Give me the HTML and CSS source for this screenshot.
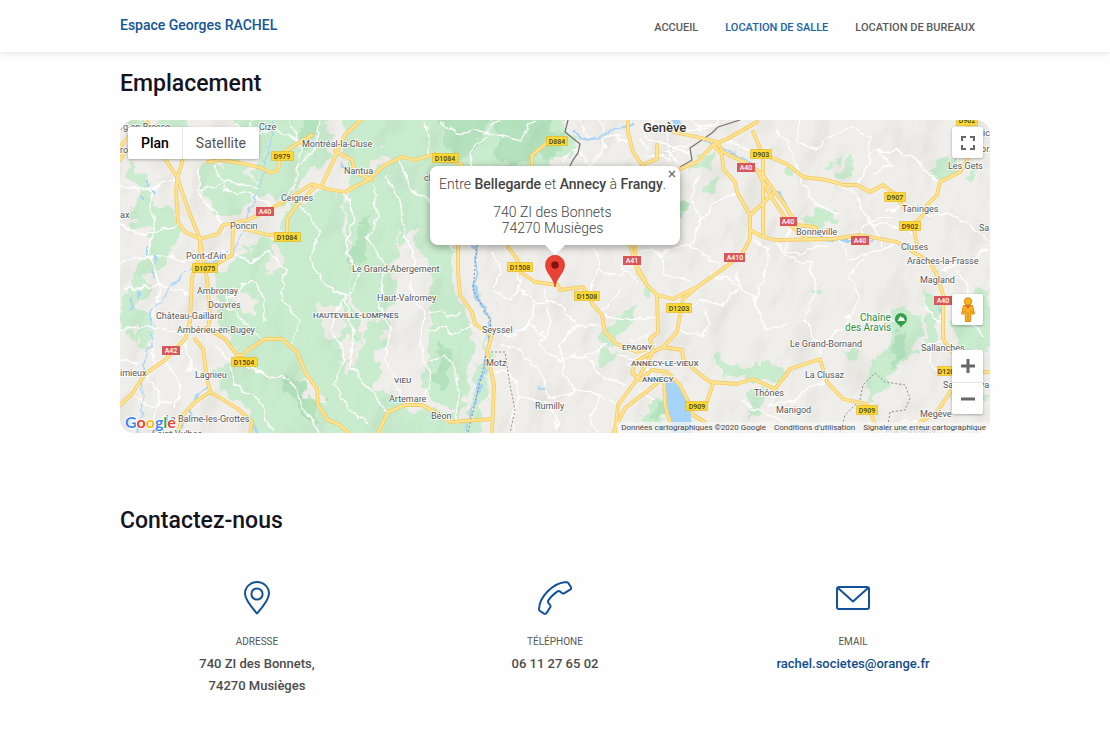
FILE: index.html
```html
<!DOCTYPE html>
<html lang="fr">
<head>
<meta charset="utf-8">
<meta name="viewport" content="width=device-width, initial-scale=1">
<title>Espace Georges RACHEL</title>
<link rel="stylesheet" href="styles.css">
</head>
<body>
<header class="site-header">
  <div class="container header-row">
    <a class="brand" href="#">Espace Georges RACHEL</a>
    <nav class="nav">
      <a href="#">ACCUEIL</a>
      <a class="active" href="#">LOCATION DE SALLE</a>
      <a href="#">LOCATION DE BUREAUX</a>
    </nav>
  </div>
</header>
<main class="container">
  <section>
    <h2>Emplacement</h2>
    <div class="map">
      <svg class="map-canvas" viewBox="120 120 870 313" preserveAspectRatio="xMidYMid slice" role="img" aria-label="Carte">
        <defs>
          <filter id="rough" x="-5%" y="-5%" width="110%" height="110%" color-interpolation-filters="sRGB">
            <feTurbulence type="fractalNoise" baseFrequency="0.06" numOctaves="3" seed="4"/>
            <feDisplacementMap in="SourceGraphic" scale="24" xChannelSelector="R" yChannelSelector="G"/>
          </filter>
          <filter id="wiggle" x="-5%" y="-5%" width="110%" height="110%" color-interpolation-filters="sRGB">
            <feTurbulence type="fractalNoise" baseFrequency="0.09" numOctaves="2" seed="9"/>
            <feDisplacementMap in="SourceGraphic" scale="10" xChannelSelector="R" yChannelSelector="G"/>
          </filter>
          <filter id="relief" x="0" y="0" width="100%" height="100%" color-interpolation-filters="sRGB">
            <feTurbulence type="fractalNoise" baseFrequency="0.05 0.022" numOctaves="3" seed="12"/>
            <feColorMatrix values="0 0 0 0 0.5  0 0 0 0 0.55  0 0 0 0 0.5  1.6 0 0 0 -0.78"/>
          </filter>
          <path id="roads" d="M165 159 177 177 188 209 200 239 200 255 192 277 190 322 185 339 165 360 145 374 132 394 120 405
            M183 159 177 179 176 192 178 222 185 232 200 239 218 234 223 225 248 220 265 212 288 199 312 184 327 189 345 192 368 180 385 165 402 157 415 160 435 154 462 165
            M233 228 232 255 215 265M200 239 203 259 207 279 210 315 208 329 198 329M245 229 268 235 287 234 287 219 297 205 315 187
            M208 162 221 160 240 163 262 168 270 173 278 170 280 155 295 145 312 135
            M322 185 328 172 335 157 345 135 362 119M335 151 352 160 355 172 372 180
            M120 160 132 142 148 122M120 147 130 135
            M195 339 203 349 207 379 210 392 238 409 252 422 250 433M210 392 195 402 183 415 178 433
            M208 329 225 339 237 355 243 355 248 350 265 339 282 339 297 352 305 372 317 389 318 405 328 420 340 425 348 433
            M378 433 388 412 405 405 422 405 435 412 450 422 492 419M492 433 494 385 487 352 492 335 475 324 472 312 460 295 458 272 458 245
            M508 247 517 259 520 272 535 282 558 285 560 290 583 287 593 305 602 315 605 332 617 344 637 352 645 350
            M532 165 532 155 548 142
            M628 120 628 132 633 152 642 165M657 145 657 159 642 165M678 170 697 162 713 145 727 139 757 122
            M673 132 697 137 717 142 723 152 750 165 763 175 775 192 783 202 797 225 815 227 818 232
            M713 145 722 155 723 169 735 182 737 192 750 215 750 239 742 254 723 269 697 287 673 299 657 295 647 285 638 272 630 245
            M750 215 775 192M750 230 763 237 775 240 833 239M763 237 763 155 753 132
            M657 295 658 332 650 339 653 352 640 375 618 405 615 433M697 287 683 299 677 332 663 347 653 352
            M663 347 682 350 683 359 697 372 710 382 737 384 753 379 775 389 790 369 820 359 827 382 843 399 867 404 873 419 878 433
            M713 384 707 402M640 380 652 370 667 372 680 385 690 405 693 415 705 422
            M664 377 665 405 670 422M613 433 625 408 650 389 664 377M653 352 635 362 632 373 640 380
            M770 157 787 164 803 177 827 180 843 185 857 185 870 192 883 185 895 194 903 207
            M757 170 770 195 790 225 807 239 833 239 860 235 897 242 913 252 930 262 937 275 943 295 943 339 952 352 968 372 990 372
            M917 245 913 225 923 215 927 205 937 195 940 182 960 172 970 155 967 120M975 385 952 389 937 412 920 422 917 433M635 245 636 265 645 280"/>
        </defs>
        <rect x="120" y="120" width="870" height="313" fill="#f0eeea"/>
        <g filter="url(#rough)" fill="#c9ecce">
          <path d="M128 160 145 170 155 200 172 215 178 240 160 250 148 232 130 225 138 195zM165 210 178 230 168 262 150 275 142 300 155 325 145 350 130 330 120 335 120 300 140 270zM200 165 245 160 260 190 240 215 212 212 200 190zM130 120 190 120 200 140 180 160 150 150z"/>
          <path d="M225 110 335 110 328 150 310 175 280 203 255 190 258 160 238 140zM285 208 325 190 345 198 340 235 352 262 348 300 362 330 355 370 372 400 352 440 250 440 250 410 222 395 215 370 238 358 228 335 215 320 222 290 212 275 240 255 262 240 285 240z"/>
          <path d="M342 110 565 110 575 150 545 170 475 170 464 210 452 240 457 290 472 330 470 370 462 418 428 402 425 360 430 320 432 280 418 245 415 210 405 190 398 240 395 300 380 320 362 318 352 300 348 240 345 205 350 190 345 160zM365 325 385 320 380 360 370 400 355 370zM400 170 425 172 418 225 400 245zM470 400 485 350 492 300 487 380 480 433 466 433z"/>
          <path d="M355 405 390 385 410 410 480 420 480 440 350 440z"/>
          <path d="M600 330 620 315 640 305 625 330 610 350zM600 345 617 352 608 370 598 370zM655 395 665 400 666 425 650 433 640 420 648 405zM720 355 740 370 775 360 785 380 750 382 720 378zM705 180 718 175 715 195 705 192zM680 200 690 205 685 215 677 212zM748 395 760 385 765 405 748 420zM640 292 650 288 650 297zM700 155 715 150 705 168 690 170z"/>
          <path d="M848 160 855 165 848 182 838 178zM810 215 835 210 830 225 800 222zM935 165 955 155 950 180 935 180zM965 175 975 165 975 180zM895 305 918 312 920 345 900 360 890 385 870 400 865 385 880 360 890 330zM920 290 940 300 940 350 925 345zM950 300 990 290 990 350 960 355zM845 350 855 352 850 362 842 360zM950 390 990 395 980 410 955 405zM785 172 800 172 800 180zM810 285 822 288 818 295zM550 125 570 122 575 145 560 152zM830 165 836 162 836 170z"/>
        </g>
        <g filter="url(#rough)" fill="#b3e2bd">
          <path d="M430 115 490 115 480 150 455 160 445 140zM495 115 562 115 540 150 515 168 495 150zM545 133 562 135 558 160 545 160zM300 125 325 120 315 135 300 150zM290 370 330 400 310 420 280 390zM355 230 372 210 365 260 350 270zM440 340 455 350 445 395 432 380zM895 335 910 330 905 350 885 375zM655 400 666 400 662 420 650 425zM678 200 690 203 684 216z"/>
        </g>
        <g filter="url(#rough)" fill="#f0ede9">
          <path d="M255 205 275 205 268 225 250 225zM270 250 285 255 275 280 262 265zM320 300 345 310 335 340 325 330zM300 380 320 385 330 410 310 400zM350 335 360 350 345 380 340 350zM440 170 450 175 445 200 436 190zM238 290 255 300 245 320 232 300zM380 150 390 155 378 172 372 165z"/>
        </g>
        <g transform="rotate(22 555 276)"><rect x="60" y="-100" width="990" height="760" filter="url(#relief)" opacity=".17"/></g>
        <g fill="none" stroke="#fff" stroke-width="1.4" filter="url(#wiggle)">
          <path d="M120 185 150 190 175 180M120 225 145 235 178 225M120 265 150 255 192 260M125 290 160 285 190 295M120 330 150 325 185 335M150 190 155 225 150 255 160 285 150 325 155 365M200 160 198 190 215 215 223 225M215 165 225 190 250 195 275 205M200 190 230 180 262 190M235 125 255 135 275 130 300 140M252 120 248 145 230 160M290 120 300 150 296 180 288 199M320 120 315 150 300 165M205 255 225 250 250 262 270 250 285 270 280 300 300 320 290 345M210 300 235 310 250 330 265 339M225 300 250 280 262 290 265 320M213 345 230 360 235 385 260 400 270 433M240 360 265 375 290 380 305 410 320 433M145 374 160 395 155 420 160 433M165 360 180 385 175 410M132 394 150 405 175 400M185 340 190 370 207 379M120 360 140 365M300 205 320 230 310 260 325 285 345 295 330 330 345 350 335 385 350 410 370 425M345 192 355 220 345 250 360 275 345 300 355 335 350 365 365 385 388 412M372 185 378 215 368 240 385 265 378 300 390 330 385 360 395 380 405 405M385 175 400 200 405 235 415 260 410 290 425 310 420 345 430 375 425 405M400 160 410 190 430 200 440 235 458 250M430 155 425 125M470 170 475 145 490 130 500 120M440 120 460 135 475 130 520 140 535 120M430 330 445 325 452 335 475 324M430 360 445 355 455 370 460 400 455 422M430 315 440 310 450 318 462 312"/>
          <path d="M490 250 500 265 495 290 510 300 520 290 535 300 530 325 515 335 492 330M520 290 517 265M535 300 560 305 575 325 600 325M545 290 550 320 540 345 560 360 585 355 605 345M500 345 520 350 545 380 550 400 575 390 600 395 618 405M530 325 545 340M492 370 510 375 520 395 550 405 560 433M520 395 510 420 515 433M575 325 560 345 565 375 575 390M585 355 600 375 625 385M600 395 590 420 600 433M595 250 600 270 620 275 636 265M600 270 590 290M640 250 660 255 690 245 720 265M660 255 665 275 690 280M690 245 700 220 720 200 737 192M700 220 690 195 700 175M620 290 610 305 600 310M605 315 630 320 658 315M683 310 700 300 720 305 740 285M677 332 700 335 710 325 705 310M740 285 735 270M710 275 730 280 755 300 765 330 790 325M750 239 770 250 765 275 755 300M775 240 790 260 810 262 815 290 805 320 820 350M637 280 620 265"/>
          <path d="M580 120 590 140 610 135 628 140M600 120 605 150 590 165M560 160 575 150 590 165M640 125 650 140 670 145 690 155M650 120 660 130 675 125 690 130 705 125M640 140 650 150M670 120 668 150 678 165M690 120 700 130 720 120M660 150 690 145M645 155 670 158M775 130 790 145 800 175M800 120 795 140 815 150 835 135 850 125 870 140 868 165 857 185M727 139 745 150 763 155M800 177 815 205 840 215M840 185 860 200 870 225 885 245M870 225 895 225 917 235M885 210 903 207 925 215 955 215 990 240M875 175 890 165 880 150 910 155 930 175 940 182M960 172 955 150M860 235 870 220 895 215M790 225 785 250 800 255 825 245M840 240 850 260 880 250 897 242M818 360 825 340 845 325 860 300 850 275 865 260M827 382 810 385 795 400 770 405 775 389M743 400 755 410 780 420 800 433M890 433 905 420 920 422M925 305 935 320 943 325M943 339 930 345 930 365 945 375M955 270 970 290 965 320 985 335M990 250 970 260 940 270M640 392 655 400M620 355 640 362M625 365 640 360 660 365M630 340 645 335 655 345M645 365 655 380"/>
        </g>
        <g fill="none" stroke="#a7d3f7" stroke-width="1.6" filter="url(#wiggle)">
          <path d="M275 122 270 145 262 175 260 190 252 205 245 225 235 250 215 260 185 272 170 290 150 310 152 345 142 370 143 400 140 433" stroke-width="1.2"/>
          <path d="M475 245 477 300 490 318 489 345 485 365 475 400 468 433" stroke-width="3"/>
          <path d="M572 130 585 140 598 138 612 130 625 128 635 122M705 140 745 160 772 185 800 230 830 240 890 240M210 385 195 400 180 433M940 300 945 345" stroke-width="2"/>
          <path d="M340 165 356 174M250 420 260 433M538 388 546 390" stroke-width="3"/>
          <path d="M147 180v8M152 190v5M143 195v5M148 245v10M155 255v8M130 295l3 14M137 290l2 8M152 270l2 8" stroke-width="2"/>
        </g>
        <path d="M665 378 672 379 680 386 690 404 692 433 671 433 667 405z" fill="#a5d4f8"/>
        <path d="M672 120 680 120 682 127 674 125z" fill="#a5d4f8"/>
        <g fill="none" stroke="#8d8d8d" stroke-width="1">
          <path d="M568 120 565 132 580 144 578 153 573 160 568 170M680 167 692 160 690 148 712 133 718 127 740 120" stroke="#777" stroke-width="1.3"/>
          <path d="M477 245 473 290 491 322 487 352 468 433M487 352 505 352 510 385 515 410 510 433M840 433 845 415 860 400 863 385 875 373 885 382 905 385 910 398 905 410 890 412 888 425" stroke-dasharray="2 2"/>
        </g>
        <g fill="none" stroke-linejoin="round" stroke-linecap="round">
          <use href="#roads" stroke="#f5cd66" stroke-width="3.8"/>
          <use href="#roads" stroke="#ffe494" stroke-width="2"/>
        </g>
        <g class="place">
          <text x="120" y="130">rg-en-Bresse</text><text x="120" y="153">ro</text>
          <text x="259" y="130">Cize</text><text x="302" y="147">Montréal-la-Cluse</text>
          <text x="344" y="174">Nantua</text><text x="281" y="201">Ceignes</text>
          <text x="230" y="229">Poncin</text><text x="186" y="259">Pont-d'Ain</text>
          <text x="120" y="218">ax</text><text x="352" y="272">Le Grand-Abergement</text>
          <text x="424" y="181">ch</text>
          <text x="197" y="294">Ambronay</text><text x="208" y="308">Douvres</text>
          <text x="156" y="319">Château-Gaillard</text><text x="177" y="333">Ambérieu-en-Bugey</text>
          <text x="120" y="376">imieux</text><text x="195" y="378">Lagnieu</text>
          <text x="166" y="422">La Balme-les-Grottes</text><text x="152" y="437">Saint-Vulbas</text>
          <text x="377" y="301">Haut-Valromey</text><text x="482" y="333">Seyssel</text>
          <text x="486" y="366">Motz</text><text x="389" y="402">Artemare</text>
          <text x="431" y="419">Béon</text><text x="535" y="409">Rumilly</text>
          <text x="796" y="235">Bonneville</text><text x="902" y="212">Taninges</text>
          <text x="901" y="250">Cluses</text><text x="907" y="264">Arâches-la-Frasse</text>
          <text x="948" y="169">Les Gets</text><text x="979" y="231">Sa</text>
          <text x="980" y="136">ric</text><text x="981" y="152">orz</text>
          <text x="920" y="283">Magland</text><text x="790" y="347">Le Grand-Bornand</text>
          <text x="805" y="378">La Clusaz</text><text x="754" y="396">Thônes</text>
          <text x="776" y="413">Manigod</text><text x="921" y="351">Sallanches</text>
          <text x="943" y="388">Saint-Gerva</text><text x="920" y="417">Megève</text>
          <text x="885" y="434">Praz-sur-Arly</text>
        </g>
        <g class="place district">
          <text x="313" y="318">HAUTEVILLE-LOMPNES</text><text x="394" y="383">VIEU</text>
          <text x="622" y="350">EPAGNY</text><text x="631" y="366">ANNECY-LE-VIEUX</text><text x="642" y="382">ANNECY</text>
        </g>
        <text class="place city" x="643" y="132">Genève</text>
        <g class="place park"><text x="860" y="321">Chaîne</text><text x="845" y="331">des Aravis</text></g>
        <path d="M901 328c-1-4-6-4-6-9a6 6 0 0 1 12 0c0 5-5 5-6 9z" fill="#34a04a"/>
        <path d="M897.500 321 900.500 316 902 318 903 317 905 321z" fill="#fff"/>
        <g fill="#fdd835" stroke="#d8b422" stroke-width=".6">
          <path d="M271.500 151.500h22v9h-22zM432.500 153.500h26v9h-26zM274.500 232.500h26v9h-26zM192.500 263.500h25v9h-25zM231.500 357.500h26v9h-26zM546.500 136.500h21v9h-21zM507.500 262.500h25v9h-25zM574.500 291.500h25v9h-25zM666.500 303.500h25v9h-25zM685.500 401.500h22v9h-22zM750.500 149.500h21v9h-21zM884.500 192.500h21v9h-21zM899.500 221.500h21v9h-21zM956.500 116.500h21v9h-21zM856.500 405.500h21v9h-21zM937.500 366.500h21v9h-21z"/>
        </g>
        <g class="shield">
          <text x="282" y="159">D979</text><text x="445" y="161">D1084</text><text x="287" y="240">D1084</text><text x="205" y="271">D1075</text>
          <text x="244" y="365">D1504</text><text x="557" y="144">D884</text><text x="520" y="270">D1508</text><text x="587" y="299">D1508</text>
          <text x="679" y="311">D1203</text><text x="697" y="409">D909</text><text x="761" y="157">D903</text><text x="895" y="200">D907</text>
          <text x="910" y="229">D902</text><text x="967" y="123">D902</text><text x="867" y="413">D909</text><text x="948" y="374">D1205</text>
        </g>
        <path d="M256 207h18v9h-18zM162 346h18v9h-18zM623 256h18v9h-18zM737 163h18v9h-18zM724 253h21v9h-21zM780 217h17v9h-17zM851 236h18v9h-18zM934 296h18v9h-18z" fill="#d9575b"/>
        <g class="shield motorway">
          <text x="265" y="214">A40</text><text x="171" y="353">A42</text><text x="632" y="263">A41</text><text x="746" y="170">A40</text>
          <text x="735" y="260">A410</text><text x="788" y="224">A40</text><text x="860" y="243">A40</text><text x="943" y="303">A40</text>
        </g>
      </svg>

      <div class="map-types">
        <button class="selected" type="button">Plan</button><button type="button">Satellite</button>
      </div>
      <button class="map-button fullscreen" type="button" aria-label="Plein écran">
        <svg width="16" height="16" viewBox="0 0 16 16" fill="none" stroke="#666" stroke-width="2"><path d="M2 6V2H6M10 2H14V6M14 10V14H10M6 14H2V10"/></svg>
      </button>
      <div class="map-tools">
        <button class="map-button" type="button" aria-label="Street View">
          <svg width="16" height="26" viewBox="0 0 16 26"><path d="M3.500 8.500h9l2 8-2 1-1.500-4-.500 11h-5l-.500-11-1.500 4-2-1z" fill="#fbb01c" stroke="#d98b16"/><circle cx="8" cy="4.500" r="3.700" fill="#fbb01c" stroke="#d98b16"/><path d="M5 8.500h6L8 12z" fill="#e8672a"/><path d="M8 15v9" stroke="#d98b16"/></svg>
        </button>
        <div class="zoom">
          <button class="map-button" type="button" aria-label="Zoom avant"><svg width="14" height="14" viewBox="0 0 14 14" stroke="#666" stroke-width="3"><path d="M0 7H14M7 0V14"/></svg></button>
          <button class="map-button" type="button" aria-label="Zoom arrière"><svg width="14" height="14" viewBox="0 0 14 14" stroke="#666" stroke-width="3"><path d="M0 7H14"/></svg></button>
        </div>
      </div>
      <div class="popup">
        <button class="close" type="button" aria-label="Fermer"><svg width="8" height="8" viewBox="0 0 8 8" stroke="#666" stroke-width="1.200"><path d="M1 1 7 7M7 1 1 7"/></svg></button>
        <p>Entre <b>Bellegarde</b> et <b>Annecy</b> à <b>Frangy</b>.</p>
        <p>740 ZI des Bonnets<br>74270 Musièges</p>
      </div>
      <svg class="marker" width="20" height="32" viewBox="0 0 20 32"><path d="M10 32C9 23 .5 18 .5 9.800a9.500 9.500 0 0 1 19 0C19.500 18 11 23 10 32z" fill="#ea4335" stroke="#d33426" stroke-width=".7"/><circle cx="10" cy="10" r="3.700" fill="#811411"/></svg>
      <a class="google" href="#"><span class="g-blue">G</span><span class="g-red">o</span><span class="g-yellow">o</span><span class="g-blue">g</span><span class="g-green">l</span><span class="g-red">e</span></a>
      <div class="credits"><span>Données cartographiques ©2020 Google</span><a href="#">Conditions d'utilisation</a><a href="#">Signaler une erreur cartographique</a></div>
    </div>
  </section>

  <section class="contact">
    <h2>Contactez-nous</h2>
    <div class="cards">
      <div class="card">
        <svg class="icon" viewBox="0 0 34 34"><path d="M17 32.500C15 30 5 19.500 5 12.500a12 11.500 0 0 1 24 0C29 19.500 19 30 17 32.500z"/><circle cx="17" cy="13" r="5.600"/></svg>
        <h3>ADRESSE</h3>
        <p>740 ZI des Bonnets,<br>74270 Musièges</p>
      </div>
      <div class="card">
        <svg class="icon" viewBox="0 0 34 34"><path d="M26.500 1.200 28.700 1.200Q29.700 1.200 30.300 2L33 6.200Q33.600 7.400 32.500 8.400L26 12.300Q24.800 12.900 23.800 12L21.800 10.300Q20.800 9.700 19.600 10.400 13 15 10.300 19.600 9.600 20.800 10.300 21.800L12 23.800Q12.900 24.800 12.300 26L8.400 32.200Q7.400 33.400 6 32.700L2 30Q1 29.400 1 28.300 1.200 19 9.500 10.500 18 2 26.500 1.200z"/></svg>
        <h3>TÉLÉPHONE</h3>
        <p>06 11 27 65 02</p>
      </div>
      <div class="card">
        <svg class="icon" viewBox="0 0 34 34"><rect x="1" y="6" width="32" height="22" rx="2"/><path d="M2 7 17 20.500 32 7"/></svg>
        <h3>EMAIL</h3>
        <p><a href="mailto:rachel.societes@orange.fr">rachel.societes@orange.fr</a></p>
      </div>
    </div>
  </section>
</main>
</body>
</html>
```
FILE: styles.css
```css
* { box-sizing: border-box; }
body { margin: 0; background: #fefefe; color: #4c4c4c; font-family: Roboto, "Liberation Sans", sans-serif; }
a { color: inherit; text-decoration: none; }
button { margin: 0; padding: 0; border: 0; background: #fff; font: inherit; cursor: pointer; }
.container { width: 100%; max-width: 900px; margin: 0 auto; padding: 0 15px; }

.site-header { background: #fefefe; box-shadow: 0 1px 6px rgba(0, 0, 0, .12); }
.header-row { display: flex; align-items: center; justify-content: space-between; height: 52px; }
.brand { padding-bottom: 2px; color: #145596; font-size: 14px; font-weight: 500; }
.nav { display: flex; gap: 27px; padding: 2px 15px 0 0; color: #5a5a5a; font-size: 11px; font-weight: 500; }
.nav .active { color: #1a62a8; }

h2 { margin: 0; color: #14141f; font-size: 23px; line-height: 28px; font-weight: 500; }
main section > h2 { padding-top: 18px; }

.map { position: relative; height: 313px; margin-top: 22px; border-radius: 14px; overflow: hidden; }
.map-canvas { display: block; width: 100%; height: 100%; }
.place { fill: #55585b; font-size: 9px; paint-order: stroke; stroke: rgba(255, 255, 255, .75); stroke-width: 2px; stroke-linejoin: round; }
.district { fill: #5d6470; font-size: 8px; font-weight: 500; }
.city { fill: #333; font-size: 13px; font-weight: 500; }
.park { fill: #2c8f49; font-size: 10px; }
.shield { fill: #4a4213; font-size: 7px; font-weight: 500; text-anchor: middle; }
.motorway { fill: #fff; }

.map-types { position: absolute; left: 8px; top: 7px; display: flex; height: 32px; border-radius: 2px; overflow: hidden; box-shadow: 0 1px 3px rgba(0, 0, 0, .3); font-size: 14px; }
.map-types button { padding: 0 13px; color: #565656; }
.map-types .selected { color: #000; font-weight: 500; border-right: 1px solid #e6e6e6; }
.map-button { display: grid; place-items: center; width: 31px; height: 31px; }
.fullscreen { position: absolute; right: 7px; top: 7px; border-radius: 2px; box-shadow: 0 1px 3px rgba(0, 0, 0, .3); }
.map-tools { position: absolute; right: 7px; bottom: 19px; display: grid; gap: 25px; }
.map-tools > * { border-radius: 2px; box-shadow: 0 1px 3px rgba(0, 0, 0, .3); }
.zoom { display: grid; background: #fff; }
.zoom .map-button { height: 32px; background: none; }
.zoom .map-button + .map-button { border-top: 1px solid #e6e6e6; }

.popup { position: absolute; left: 50%; top: 46px; width: 250px; padding: 10px 14px 9px 9px; transform: translateX(-50%); border-radius: 8px; background: #fff; box-shadow: 0 2px 7px 1px rgba(0, 0, 0, .3); color: #444; font-size: 14px; line-height: 16px; font-weight: 300; text-align: center; white-space: nowrap; }
.popup::after { content: ""; position: absolute; left: 50%; top: 100%; width: 20px; height: 10px; margin-left: -10px; background: #fff; clip-path: polygon(0 0, 100% 0, 50% 100%); }
.popup p { margin: 0 0 12px; }
.popup p:last-of-type { margin: 0; }
.popup b { font-weight: 500; }
.close { position: absolute; right: 4px; top: 4px; display: grid; background: none; }
.marker { position: absolute; left: 50%; top: 135px; margin-left: -10px; }

.google { position: absolute; left: 5px; bottom: 0; font-family: Lato, sans-serif; font-size: 16px; line-height: 22px; font-weight: 700; -webkit-text-stroke: 2px #fff; paint-order: stroke; }
.g-blue { color: #4285f4; }
.g-red { color: #ea4335; }
.g-yellow { color: #fbbc05; }
.g-green { color: #34a853; }
.credits { position: absolute; right: 0; bottom: 0; display: flex; gap: 8px; padding: 0 4px; background: rgba(245, 245, 245, .75); color: #444; font-size: 8px; line-height: 11px; }

.contact { margin-top: 56px; }
.cards { display: grid; grid-template-columns: repeat(3, 1fr); margin: 46px -12px 0; text-align: center; }
.icon { display: block; width: 34px; height: 34px; margin: 0 auto; fill: none; stroke: #13529a; stroke-width: 2; stroke-linejoin: round; }
.card h3 { margin: 20px 0 0; color: #565656; font-size: 10px; line-height: 14px; font-weight: 400; }
.card p { margin: 4px 0 0; font-size: 13px; line-height: 22px; font-weight: 500; }
.card a { color: #124c8c; }
```
